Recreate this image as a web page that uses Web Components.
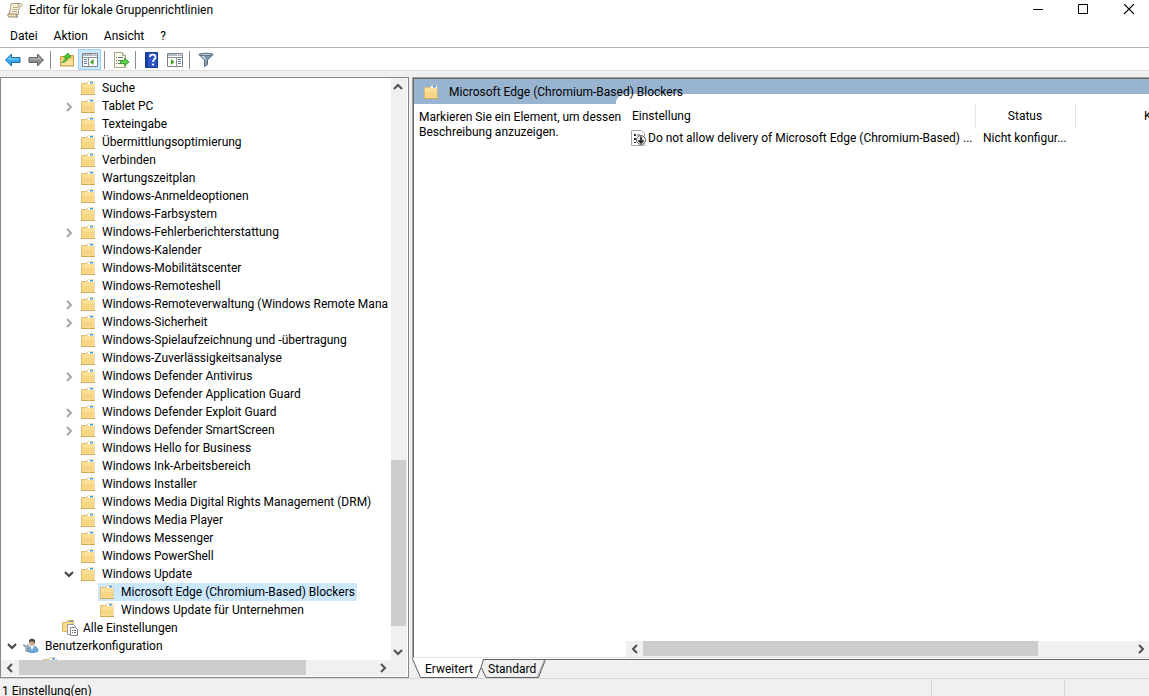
<!DOCTYPE html>
<html lang="de">
<head>
<meta charset="utf-8">
<meta name="viewport" content="width=device-width, initial-scale=1">
<title>Editor für lokale Gruppenrichtlinien</title>
<style>
  html, body { height: 100%; margin: 0; }
  body { font: 12px/18px Roboto, "Open Sans", sans-serif; color: #000; background: #f0f0f0; overflow: hidden; }
</style>
</head>
<body>
<policy-editor></policy-editor>
<script>
const ICONS = {
  folder: `<svg width="16" height="16" viewBox="0 0 16 16"><path d="M1.500 3.500h5l1.500-1.500h6v12.500h-12.500z" fill="#fbe3a0" stroke="#dcbb72"/><path d="M2 4h5.500l1-1H14v11H2z" fill="#fbdf97"/><path d="M2 8h12v5H2z" fill="#f5d07c" opacity=".7"/><path d="M8 2h6v2H8z" fill="#fff"/><path d="M10 2h3v1.500h-3z" fill="#3f9be8"/><path d="M1 14.500h14" stroke="#d0a850"/></svg>`,
  all: `<svg width="18" height="18" viewBox="0 0 18 18"><path d="M1.500 3.500h4l1-2h6v11h-11z" fill="#fbdc8e" stroke="#d9b565"/><path d="M8 2h4v1H8z" fill="#3f9be8"/><path d="M6.500 5.500h6l2 2v8h-8z" fill="#fff" stroke="#9a9a9a"/><path d="M9.500 8.500h5l2 2v6h-7z" fill="#fff" stroke="#858585"/><path d="M11 11.500h1m1 0h2m-4 2h1m1 0h2" stroke="#667"/></svg>`,
  user: `<svg width="16" height="16" viewBox="0 0 16 16"><path d="M4 13c0-4 2-5 5-5 4 0 6 2 6 5-2 2-9 2-11 0z" fill="#6fa9dc" stroke="#4479aa" stroke-width=".7"/><path d="M7 8l2 4 2-4z" fill="#fff"/><circle cx="9" cy="4.500" r="2.800" fill="#d2a27b"/><path d="M6 5V3c0-3 6-3 6 0v3l-1-2-3-1z" fill="#4c423c"/><path d="M3 7v7m-2-8v2l2 1 2-1V6M5.500 9v5" fill="none" stroke="#8994a0" stroke-width="1.200"/></svg>`,
  scroll: `<svg width="16" height="16" viewBox="0 0 16 16"><path d="M4.500 1.500h9c2 0 2 3 0 3h-1L11 13H2L4 4c0-1-1-2 .5-2.500z" fill="#f8f1d9" stroke="#a79b7b"/><path d="M1 12h9c-1 1 0 3 1 3H3c-2 0-2.500-1-2-3z" fill="#eee0b5" stroke="#93876a"/><path d="M12 2c-1 1-1 2 0 2.500" fill="none" stroke="#93876a"/><path d="M6 5.500h5m-5.500 2h5m-5.500 2h5" stroke="#b5a98a"/></svg>`,
  back: `<svg width="18" height="16" viewBox="0 0 18 16"><path d="M1.500 8l6-6v3.500H16v5H7.500V14z" fill="#35a7e8" stroke="#1a6fb5"/><path d="M3.500 7.500L6.500 4.500v2H15v1z" fill="#8ad6f8"/></svg>`,
  forward: `<svg width="18" height="16" viewBox="0 0 18 16"><path d="M16.500 8l-6-6v3.500H2v5h8.500V14z" fill="#8c8c8c" stroke="#636363"/><path d="M14.500 7.500l-3-3v2H3v1z" fill="#bbb"/></svg>`,
  up: `<svg width="16" height="16" viewBox="0 0 16 16"><path d="M1.500 4.500h5l1-1h7v10.500h-13z" fill="#f7d27c" stroke="#c99c46"/><path d="M2 8.500h12V13H2z" fill="#fbe2a0"/><path d="M2.500 10.500C4 10 6 8 6.500 5.500L4.500 5 9 1l3 4.500-2.500-.2C9 8 6 11 2.500 10.500z" fill="#4fc735" stroke="#2f9222" stroke-width=".7"/></svg>`,
  tree: `<svg width="16" height="16" viewBox="0 0 16 16"><path d="M.5 1.500h15v13H.5z" fill="#fff" stroke="#7d8288"/><path d="M1 2h14v2H1z" fill="#b3bac2"/><path d="M10 2.500h1m1 0h1m1 0h1" stroke="#fff"/><path d="M1 5.500h14M6.500 6v8" stroke="#8b9198"/><path d="M2 7.500h3m-3 2h3m-3 2h3" stroke="#627e9e"/><path d="M11.500 7v6L8 10z" fill="#34a71f"/></svg>`,
  exp: `<svg width="16" height="16" viewBox="0 0 16 16"><path d="M1.500.5h8l3 3v12h-11z" fill="#fffbe9" stroke="#aaa58f"/><path d="M9.500.5v3h3" fill="#ddd" stroke="#aaa58f"/><path d="M3 5.500h1m1 0h5M3 8.500h1m1 0h3m-5 3h1m1 0h3" stroke="#667184"/><path d="M7.500 8.500h4V6l4.500 4-4.500 4v-2.500h-4z" fill="#5fd04d" stroke="#28931d" stroke-width=".8"/></svg>`,
  help: `<svg width="14" height="16" viewBox="0 0 14 16"><path d="M.5.5h12v15H.5z" fill="#2c55c5" stroke="#183991"/><path d="M1 1h2v14H1z" fill="#1b3e9e"/><path d="M5 5c0-3.500 6-3 5.500.2C10.200 7.500 8 7.500 8 10" fill="none" stroke="#fff" stroke-width="1.800"/><circle cx="8" cy="12.500" r="1.100" fill="#fff"/></svg>`,
  pane: `<svg width="16" height="16" viewBox="0 0 16 16"><path d="M.5 1.500h15v13H.5z" fill="#fff" stroke="#7d8288"/><path d="M1 2h14v2H1z" fill="#b3bac2"/><path d="M10 2.500h1m1 0h1m1 0h1" stroke="#fff"/><path d="M1 5.500h14M9.500 6v8" stroke="#8b9198"/><path d="M11 7.500h3m-3 2h3m-3 2h3" stroke="#627e9e"/><path d="M4 7v6l3.500-3z" fill="#34a71f"/></svg>`,
  filter: `<svg width="16" height="16" viewBox="0 0 16 16"><path d="M1 2.500L6.500 8v6.500l3-2V8L15 2.500z" fill="#8298ad" stroke="#566b80"/><path d="M3 3.500L7.500 8v5L8 8 6 3.500z" fill="#d2dee9"/><ellipse cx="8" cy="2.500" rx="7" ry="1.200" fill="#b4c3d1" stroke="#566b80"/></svg>`,
  setting: `<svg width="16" height="16" viewBox="0 0 16 16"><path d="M.5.5h10l3 3v12H.5z" fill="#fff" stroke="#a5a5a5"/><path d="M3 4h2v2H3zM3 8h2v2H3zM3 12h2v1H3z" fill="#334"/><path d="M6 5h3M6 9h1" stroke="#667"/><circle cx="10" cy="10" r="4.500" fill="#eee" stroke="#686868"/><path d="M10 6.500v6M7.500 10.300l2.500 2.500 2.500-2.500" fill="none" stroke="#222" stroke-width="1.700"/></svg>`
};

const BUTTON_RESET = `button { appearance: none; border: 0; margin: 0; padding: 0; background: none; font: inherit; color: inherit; white-space: nowrap; }`;

class Part extends HTMLElement {
  render(css, html) {
    const t = document.createElement('template');
    t.innerHTML = `<style>* { box-sizing: border-box; } svg { display: block; flex: none; } ${BUTTON_RESET} ${css}</style>${html}`;
    if (!this.shadowRoot) this.attachShadow({ mode: 'open' });
    this.shadowRoot.replaceChildren(t.content.cloneNode(true));
  }
}

customElements.define('mmc-icon', class extends Part {
  connectedCallback() {
    this.render(`:host { display: inline-flex; flex: none; }`, ICONS[this.getAttribute('name')] || '');
  }
});

customElements.define('title-bar', class extends Part {
  connectedCallback() {
    this.render(`
      :host { display: flex; align-items: center; height: 20px; padding: 0 0 0 7px; background: #fff; }
      h1 { flex: 1; margin: 0 0 0 6px; font: inherit; white-space: nowrap; }
      .buttons { display: flex; gap: 5px; }
      button { display: grid; place-items: center; width: 40px; height: 20px; }`,
    `<mmc-icon name="scroll"></mmc-icon><h1><slot></slot></h1>
     <div class="buttons">
       <button aria-label="Minimieren"><svg width="12" height="12"><path d="M0 5.500h10" stroke="#000"/></svg></button>
       <button aria-label="Maximieren"><svg width="12" height="12"><path d="M.5.5h9v9h-9z" fill="none" stroke="#000"/></svg></button>
       <button aria-label="Schließen"><svg width="12" height="12"><path d="M1 0l10 10M11 0L1 10" stroke="#000" stroke-width="1.100"/></svg></button>
     </div>`);
  }
});

customElements.define('menu-bar', class extends Part {
  connectedCallback() {
    this.render(`
      :host { display: flex; gap: 16px; padding: 7px 10px 2px; background: #fff; border-bottom: 1px solid #b0b0b0; }`,
      this.getAttribute('items').split(',').map(i => `<button>${i}</button>`).join(''));
  }
});

customElements.define('tool-bar', class extends Part {
  connectedCallback() {
    this.render(`
      :host { display: flex; align-items: center; height: 23px; padding: 1px 4px 0; background: #fff; border-bottom: 1px solid #dadada; }
      button { display: grid; place-items: center; width: 23px; height: 21px; }
      button[aria-pressed="true"] { background: #cce8ff; border: 1px solid #99d1ff; }
      hr { width: 1px; height: 18px; margin: 0 4px 0 3px; border: 0; background: #8d8d8d; }
      .nav { width: 18px; margin-right: 5px; }
      .nav + hr { margin-left: 0; }`,
    `<button class="nav" aria-label="Zurück"><mmc-icon name="back"></mmc-icon></button>
     <button class="nav" aria-label="Vorwärts"><mmc-icon name="forward"></mmc-icon></button><hr>
     <button aria-label="Eine Ebene nach oben"><mmc-icon name="up"></mmc-icon></button>
     <button aria-label="Konsolenstruktur" aria-pressed="true"><mmc-icon name="tree"></mmc-icon></button><hr>
     <button aria-label="Liste exportieren"><mmc-icon name="exp"></mmc-icon></button><hr>
     <button aria-label="Hilfe"><mmc-icon name="help"></mmc-icon></button>
     <button aria-label="Aktionsbereich"><mmc-icon name="pane"></mmc-icon></button><hr>
     <button aria-label="Filter"><mmc-icon name="filter"></mmc-icon></button>`);
  }
});

/* The parts attribute gives the shares of the track before, under and after the thumb. */
customElements.define('scroll-bar', class extends Part {
  connectedCallback() {
    const v = this.hasAttribute('vertical');
    const [a, b, c] = this.getAttribute('parts').split(' ');
    const arrow = d => `<svg width="10" height="10" viewBox="0 0 10 10"><path d="${d}" fill="none" stroke="#505050" stroke-width="2"/></svg>`;
    this.render(`
      :host { display: flex; flex-direction: ${v ? 'column' : 'row'}; background: #f0f0f0; min-width: 0; min-height: 0; }
      button { flex: none; display: grid; place-items: center; width: ${v ? 14 : 17}px; height: ${v ? 17 : 15}px; }
      :host(:not([vertical])) { height: 16px; }
      .thumb { background: #cdcdcd; flex: ${b}; margin: ${v ? '0 1px 0 0' : '0 0 1px'}; }
      .a { flex: ${a}; } .c { flex: ${c}; }`,
    `<button aria-label="Zurück blättern">${arrow(v ? 'M1 7l4-4 4 4' : 'M7 1L3 5l4 4')}</button>
     <div class="a"></div><div class="thumb"></div><div class="c"></div>
     <button aria-label="Weiter blättern">${arrow(v ? 'M1 3l4 4 4-4' : 'M3 1l4 4-4 4')}</button>`);
  }
});

const NODES = [
  [3, 'Suche'], [3, 'Tablet PC', '>'], [3, 'Texteingabe'], [3, 'Übermittlungsoptimierung'], [3, 'Verbinden'],
  [3, 'Wartungszeitplan'], [3, 'Windows-Anmeldeoptionen'], [3, 'Windows-Farbsystem'],
  [3, 'Windows-Fehlerberichterstattung', '>'], [3, 'Windows-Kalender'], [3, 'Windows-Mobilitätscenter'],
  [3, 'Windows-Remoteshell'], [3, 'Windows-Remoteverwaltung (Windows Remote Mana', '>'],
  [3, 'Windows-Sicherheit', '>'], [3, 'Windows-Spielaufzeichnung und -übertragung'],
  [3, 'Windows-Zuverlässigkeitsanalyse'], [3, 'Windows Defender Antivirus', '>'],
  [3, 'Windows Defender Application Guard'], [3, 'Windows Defender Exploit Guard', '>'],
  [3, 'Windows Defender SmartScreen', '>'], [3, 'Windows Hello for Business'], [3, 'Windows Ink-Arbeitsbereich'],
  [3, 'Windows Installer'], [3, 'Windows Media Digital Rights Management (DRM)'], [3, 'Windows Media Player'],
  [3, 'Windows Messenger'], [3, 'Windows PowerShell'], [3, 'Windows Update', 'v'],
  [4, 'Microsoft Edge (Chromium-Based) Blockers', '', 'folder', true], [4, 'Windows Update für Unternehmen'],
  [2, 'Alle Einstellungen', '', 'all'], [0, 'Benutzerkonfiguration', 'v', 'user'], [1, '']
];

customElements.define('tree-node', class extends Part {
  connectedCallback() {
    const state = this.getAttribute('state');
    const toggle = state === '>' ? '<svg width="16" height="16"><path d="M6 5l4 4-4 4" fill="none" stroke="#a6a6a6" stroke-width="2"/></svg>'
      : state === 'v' ? '<svg width="16" height="16"><path d="M4 6l4 4 4-4" fill="none" stroke="#404040" stroke-width="2"/></svg>' : '';
    this.setAttribute('role', 'treeitem');
    this.render(`
      :host { display: flex; align-items: center; height: 18px; padding-left: calc(3px + 19px * var(--level)); }
      .toggle { flex: none; width: 16px; height: 16px; margin-right: 2px; }
      .item { display: flex; align-items: center; gap: 6px; height: 18px; padding: 0 2px 0 1px; }
      :host([aria-selected="true"]) .item { background: #cce8ff; }
      mmc-icon { width: 16px; }`,
    `${toggle ? `<button class="toggle" aria-label="Umschalten">${toggle}</button>` : '<span class="toggle"></span>'}
     <button class="item"><mmc-icon name="${this.getAttribute('icon')}"></mmc-icon><slot></slot></button>`);
  }
});

customElements.define('console-tree', class extends Part {
  connectedCallback() {
    this.render(`
      :host { display: grid; grid-template: minmax(0, 1fr) 16px / minmax(0, 1fr) 16px; border: 1px solid #828790; padding: 0 1px 1px 0; background: #fff; min-height: 0; }
      .nodes { overflow: hidden; padding-top: 1px; }
      .corner { background: #f0f0f0; }`,
    `<div class="nodes" role="tree">${NODES.map(([level, text, state = '', icon = 'folder', sel = false]) =>
        `<tree-node style="--level:${level}" state="${state}" icon="${icon}" aria-selected="${sel}">${text}</tree-node>`).join('')}</div>
     <scroll-bar vertical parts="364 166 17"></scroll-bar>
     <scroll-bar parts="1 287 68"></scroll-bar><div class="corner"></div>`);
  }
});

customElements.define('setting-list', class extends Part {
  connectedCallback() {
    this.render(`
      :host { display: flex; flex-direction: column; background: #fff; border-top-left-radius: 9px; padding-left: 10px; overflow: hidden; min-width: 0; }
      .view { flex: 1; overflow: hidden; padding-top: 10px; }
      table { table-layout: fixed; width: 650px; border-collapse: collapse; }
      th { height: 24px; padding: 0 6px; font-weight: inherit; text-align: center; border-right: 1px solid #e5e5e5; }
      th:first-child { text-align: left; }
      td { height: 20px; padding: 0 0 0 8px; white-space: nowrap; overflow: hidden; }
      td:first-child { padding-left: 5px; }
      .name { display: flex; align-items: center; gap: 1px; }`,
    `<div class="view"><table>
       <colgroup><col style="width:349px"><col style="width:100px"><col style="width:201px"></colgroup>
       <thead><tr><th>Einstellung</th><th>Status</th><th>Kommentar</th></tr></thead>
       <tbody><tr><td><span class="name"><mmc-icon name="setting"></mmc-icon>Do not allow delivery of Microsoft Edge (Chromium-Based) ...</span></td><td>Nicht konfigur...</td><td></td></tr></tbody>
     </table></div>
     <scroll-bar parts="0 395 94"></scroll-bar>`);
  }
});

customElements.define('view-tabs', class extends Part {
  connectedCallback() {
    this.render(`
      :host { display: block; position: relative; height: 19px; }
      :host::before { content: ""; position: absolute; inset: 0 0 auto 70px; height: 1px; background: #696969; }
      svg { position: absolute; left: 0; top: 0; }
      div { position: relative; display: grid; grid-template-columns: 46px 48px; gap: 17px; padding: 1px 0 0 13px; }
      button { line-height: 18px; }`,
    `<svg width="136" height="19" viewBox="0 0 136 19">
       <path d="M70.500 .5H133.500L126.500 18.500H73.500L69 9z" fill="#f0f0f0"/>
       <path d="M0 0H71L65 18.500H8.500z" fill="#fff"/>
       <path d="M.5 0L8.500 18.500H65L69 8.500 71.500 .5H133.500L126.500 18.500H74L69.500 9" fill="none" stroke="#606060"/>
       <path d="M132 1.500L125.500 18" stroke="#a0a0a0"/></svg>
     <div role="tablist"><button role="tab" aria-selected="true">Erweitert</button><button role="tab" aria-selected="false">Standard</button></div>`);
  }
});

customElements.define('detail-pane', class extends Part {
  connectedCallback() {
    this.render(`
      :host { display: flex; flex-direction: column; min-width: 0; min-height: 0; }
      .frame { flex: 1; display: flex; flex-direction: column; min-height: 0; background: #fff; border-left: 1px solid #a0a0a0; border-top: 1px solid #a0a0a0; padding-bottom: 1px; }
      .inner { flex: 1; display: flex; flex-direction: column; min-height: 0; border-left: 1px solid #696969; border-top: 1px solid #696969; border-bottom: 1px solid #e3e3e3; }
      header { display: flex; align-items: center; gap: 10px; height: 25px; padding-left: 9px; background: #99b4d1; }
      h2 { position: relative; z-index: 2; margin: 0; font: inherit; white-space: nowrap; }
      .body { flex: 1; display: grid; grid-template-columns: 202px minmax(0, 1fr); min-height: 0; }
      p { position: relative; z-index: 2; margin: 0; padding: 6px 0 0 5px; line-height: 15px; white-space: nowrap; }
      setting-list { position: relative; z-index: 1; margin-top: -10px; }`,
    `<div class="frame"><div class="inner">
       <header><mmc-icon name="folder"></mmc-icon><h2>Microsoft Edge (Chromium-Based) Blockers</h2></header>
       <div class="body"><p>Markieren Sie ein Element, um dessen<br>Beschreibung anzuzeigen.</p><setting-list></setting-list></div>
     </div></div><view-tabs></view-tabs>`);
  }
});

customElements.define('status-bar', class extends Part {
  connectedCallback() {
    this.render(`
      :host { display: grid; grid-template-columns: minmax(0, 1fr) 133px 85px; height: 18px; padding-top: 1px; border-top: 1px solid #d7d7d7; overflow: hidden; }
      span { height: 22px; padding: 2px 0 0 2px; white-space: nowrap; }
      span + span { border-left: 1px solid #d7d7d7; }`,
    `<span><slot></slot></span><span></span><span></span>`);
  }
});

customElements.define('policy-editor', class extends Part {
  connectedCallback() {
    this.render(`
      :host { display: flex; flex-direction: column; height: 100vh; overflow: hidden; background: #f0f0f0; }
      main { flex: 1; display: grid; grid-template: minmax(0, 1fr) / 409px minmax(0, 1fr); gap: 3px; padding-top: 6px; min-height: 0; }`,
    `<title-bar>Editor für lokale Gruppenrichtlinien</title-bar>
     <menu-bar items="Datei,Aktion,Ansicht,?"></menu-bar>
     <tool-bar></tool-bar>
     <main><console-tree></console-tree><detail-pane></detail-pane></main>
     <status-bar>1 Einstellung(en)</status-bar>`);
  }
});
</script>
</body>
</html>
